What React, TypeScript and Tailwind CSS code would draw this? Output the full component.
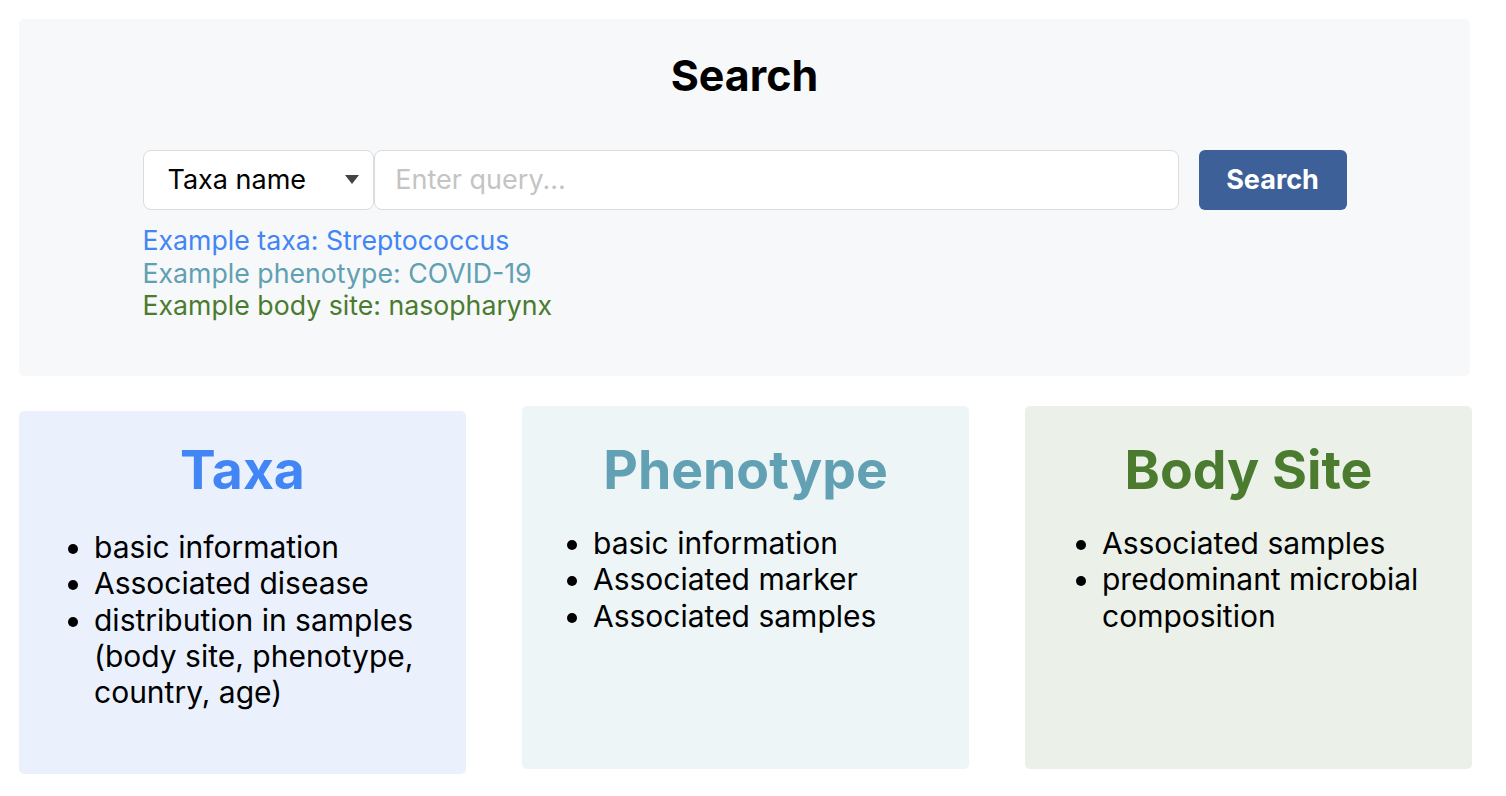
import React from "react";

export default function App() {
  return (
    <div className="min-h-[796px] bg-white px-[19px] pt-[19px]" style={{ fontFamily: "Inter, 'Noto Sans', sans-serif" }}>
      <div className="w-[1451px] h-[357px] rounded-[5px] bg-[#f7f8fa] pt-[31px]">
        <h1 className="text-center text-[43px] leading-[50px] font-bold text-black">Search</h1>
        <div className="mx-auto mt-[50px] w-[1204px]">
          <div className="flex items-center h-[60px]">
            <div className="flex h-[60px] w-[232px] items-center justify-between rounded-[8px] border border-[#dcdcdc] bg-white pl-[24px] pr-[14px]">
              <span className="text-[27px] text-black">Taxa name</span>
              <svg width="14" height="10" viewBox="0 0 14 10"><path d="M0 0 L14 0 L7 9 Z" fill="#444" /></svg>
            </div>
            <div className="flex h-[60px] w-[805px] items-center rounded-[8px] border border-[#dcdcdc] bg-white pl-[20px]">
              <span className="text-[27px] text-[#c4c4c4]">Enter query...</span>
            </div>
            <button className="ml-[20px] h-[60px] w-[148px] rounded-[6px] bg-[#3d6098] text-[27px] font-bold text-white">Search</button>
          </div>
          <div className="mt-[14px] text-[26.7px] leading-[32.5px]">
            <div className="text-[#4285f4]">Example taxa: Streptococcus</div>
            <div className="text-[#5fa0b2]">Example phenotype: COVID-19</div>
            <div className="text-[#4a7b2f]">Example body site: nasopharynx</div>
          </div>
        </div>
      </div>
      <div className="mt-[30px] flex items-start gap-[56px]">
        <Card bg="bg-[#eaf1fd]" color="text-[#4285f4]" title="Taxa" items={["basic information", "Associated disease", "distribution in samples (body site, phenotype, country, age)"]} extra="mt-[5px] pt-[26px]" listExtra="mt-[27px] pl-[75px]" />
        <Card bg="bg-[#edf5f7]" color="text-[#62a0b3]" title="Phenotype" items={["basic information", "Associated marker", "Associated samples"]} extra="pt-[31px]" listExtra="mt-[23px] pl-[71px]" />
        <Card bg="bg-[#ebf0e9]" color="text-[#4a7b2f]" title="Body Site" items={["Associated samples", "predominant microbial composition"]} extra="pt-[31px]" listExtra="mt-[23px] pl-[77px]" />
      </div>
    </div>
  );
}

function Card({ bg, color, title, items, extra, listExtra }: { bg: string; color: string; title: string; items: string[]; extra: string; listExtra: string }) {
  return (
    <div className={`${bg} ${extra} h-[363px] w-[447px] rounded-[5px]`}>
      <h2 className={`text-center text-[53.5px] leading-[65px] font-bold ${color}`}>{title}</h2>
      <ul className={`${listExtra} list-disc pr-[28px] text-[30px] leading-[36.25px] text-black`}>
        {items.map((t) => (
          <li key={t}>{t}</li>
        ))}
      </ul>
    </div>
  );
}
